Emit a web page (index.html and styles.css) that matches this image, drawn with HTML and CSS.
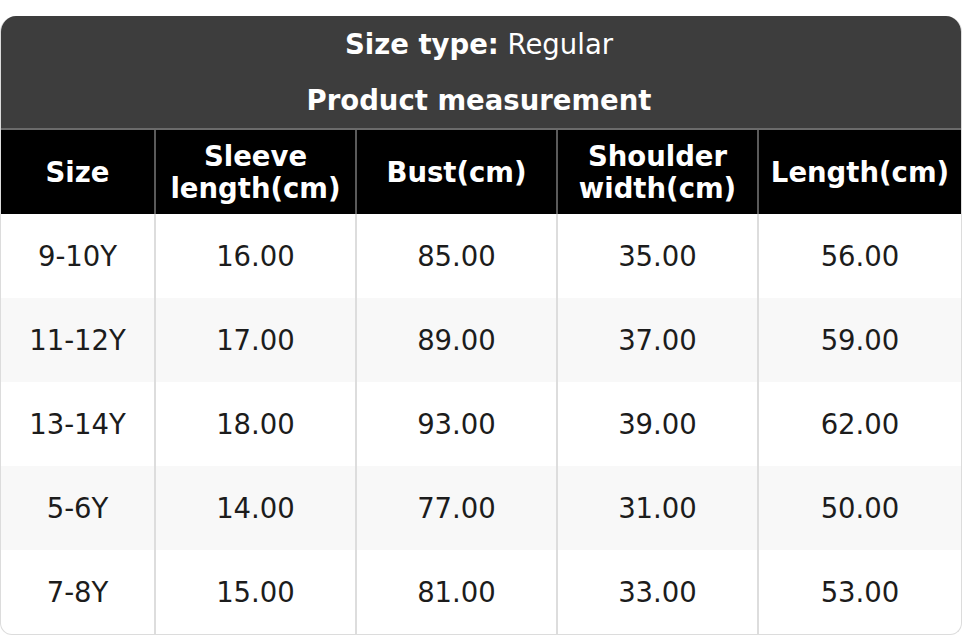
FILE: index.html
```html
<!DOCTYPE html>
<html>
<head>
<meta charset="utf-8">
<link rel="stylesheet" href="styles.css">
</head>
<body>
<div class="card">
  <div class="head">
    <div class="head-line"><b>Size type:</b>&nbsp;Regular</div>
    <div class="head-line"><b>Product measurement</b></div>
  </div>
  <table class="grid">
    <colgroup>
      <col class="c1"><col class="cn"><col class="cn"><col class="cn"><col class="cl">
    </colgroup>
    <thead>
      <tr>
        <th>Size</th>
        <th>Sleeve<br>length(cm)</th>
        <th>Bust(cm)</th>
        <th>Shoulder<br>width(cm)</th>
        <th>Length(cm)</th>
      </tr>
    </thead>
    <tbody>
      <tr><td>9-10Y</td><td>16.00</td><td>85.00</td><td>35.00</td><td>56.00</td></tr>
      <tr><td>11-12Y</td><td>17.00</td><td>89.00</td><td>37.00</td><td>59.00</td></tr>
      <tr><td>13-14Y</td><td>18.00</td><td>93.00</td><td>39.00</td><td>62.00</td></tr>
      <tr><td>5-6Y</td><td>14.00</td><td>77.00</td><td>31.00</td><td>50.00</td></tr>
      <tr><td>7-8Y</td><td>15.00</td><td>81.00</td><td>33.00</td><td>53.00</td></tr>
    </tbody>
  </table>
</div>
</body>
</html>
```

FILE: styles.css
```css
html, body {
  margin: 0;
  padding: 0;
  background: #ffffff;
}

body {
  padding-top: 16px;
  font-family: "DejaVu Sans", sans-serif;
  font-size: 27.5px;
}

.card {
  width: 962px;
  box-sizing: border-box;
  border: 1px solid #dcdcdc;
  border-top: none;
  border-radius: 16px 16px 12px 12px;
  overflow: hidden;
}

.head {
  background: #3d3d3d;
  color: #ffffff;
  border-bottom: 2px solid #6b6b6b;
}

.head-line {
  height: 56px;
  display: flex;
  align-items: center;
  justify-content: center;
  padding-right: 4px;
}

.grid {
  width: 100%;
  border-collapse: collapse;
  table-layout: fixed;
}

.c1 { width: 154px; }
.cn { width: 201px; }

.grid th {
  background: #000000;
  color: #ffffff;
  font-weight: bold;
  height: 84px;
  padding: 0;
  line-height: 32px;
  text-align: center;
  border-left: 2px solid #5a5a5a;
}

.grid td {
  height: 84px;
  padding: 0;
  line-height: 32px;
  text-align: center;
  color: #1c1c1c;
  border-left: 2px solid #dddddd;
}

.grid th:first-child,
.grid td:first-child {
  border-left: none;
}

.grid tbody tr:nth-child(even) td {
  background: #f8f8f8;
}
```
